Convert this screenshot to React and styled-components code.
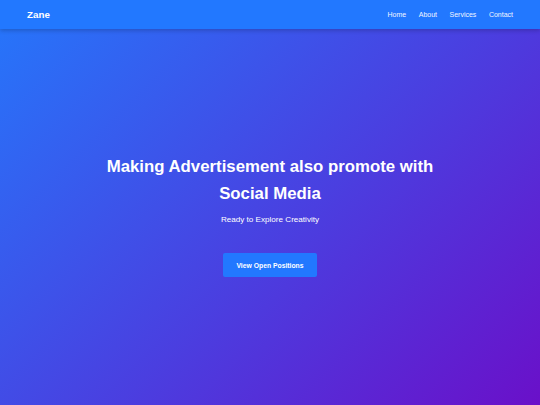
import React from 'react';
import styled, { createGlobalStyle } from 'styled-components';

const GlobalStyle = createGlobalStyle`
  * { box-sizing: border-box; }
  html, body { margin: 0; padding: 0; }
  body {
    font-family: "Liberation Sans", Arial, sans-serif;
    color: #fff;
  }
`;

const Page = styled.div`
  height: 100vh;
  display: flex;
  flex-direction: column;
  background: linear-gradient(135deg, #2577fb 0%, #4a3fe0 55%, #6a10c9 100%);
`;

// Top navigation bar
const Nav = styled.nav`
  height: 29px;
  flex-shrink: 0;
  display: flex;
  align-items: center;
  justify-content: space-between;
  padding: 0 27px;
  background: #2278ff;
  box-shadow: 0 2px 4px rgba(0, 0, 0, 0.18);
  position: relative;
  z-index: 1;
`;

const Brand = styled.div`
  font-size: 9.8px;
  font-weight: 700;
`;

const Links = styled.ul`
  display: flex;
  gap: 12.5px;
  list-style: none;
  margin: 0;
  padding: 0;
`;

const LinkItem = styled.li`
  font-size: 7px;
  color: #f2f6ff;
`;

// Hero section
const Hero = styled.section`
  flex: 1;
  display: flex;
  flex-direction: column;
  align-items: center;
  justify-content: center;
  text-align: center;
  padding-bottom: 4px;
`;

const Title = styled.h1`
  margin: 0;
  max-width: 345px;
  font-size: 16.8px;
  line-height: 27px;
  font-weight: 700;
`;

const Subtitle = styled.p`
  margin: 7px 0 0;
  font-size: 8.1px;
  line-height: 12px;
`;

const Button = styled.button`
  margin-top: 27px;
  width: 94px;
  height: 24px;
  border: none;
  border-radius: 2px;
  background: #2278ff;
  color: #fff;
  font-family: inherit;
  font-size: 6.8px;
  font-weight: 700;
  cursor: pointer;
`;

const links = ['Home', 'About', 'Services', 'Contact'];

export default function App() {
  return (
    <>
      <GlobalStyle />
      <Page>
        <Nav>
          <Brand>Zane</Brand>
          <Links>
            {links.map((l) => (
              <LinkItem key={l}>{l}</LinkItem>
            ))}
          </Links>
        </Nav>
        <Hero>
          <Title>Making Advertisement also promote with Social Media</Title>
          <Subtitle>Ready to Explore Creativity</Subtitle>
          <Button>View Open Positions</Button>
        </Hero>
      </Page>
    </>
  );
}
